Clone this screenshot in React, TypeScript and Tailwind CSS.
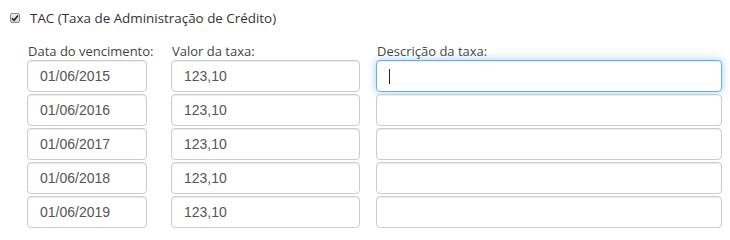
import React from "react";

const rows = [
  { date: "01/06/2015", value: "123,10" },
  { date: "01/06/2016", value: "123,10" },
  { date: "01/06/2017", value: "123,10" },
  { date: "01/06/2018", value: "123,10" },
  { date: "01/06/2019", value: "123,10" },
];

const labelCls =
  "h-[17px] pl-px text-[13px] leading-[17px] text-[#444] font-['Open_Sans',sans-serif] whitespace-nowrap";
const boxCls =
  "h-[32px] rounded-[4px] border border-[#ccc] bg-white shadow-[inset_0_1px_1px_rgba(0,0,0,0.075)] flex items-center px-[12px] text-[14px] text-[#555] font-['Liberation_Sans',Arial,sans-serif]";

export default function App() {
  return (
    <div className="w-[730px] h-[239px] bg-white overflow-hidden">
      <div className="flex items-center pt-[9px] pl-[10px] h-[27px]">
        <span className="w-[10px] h-[10px] rounded-[2px] border border-[#8a8a8a] bg-gradient-to-b from-[#f0f0f0] to-[#d6d6d6] flex items-center justify-center">
          <svg width="8" height="8" viewBox="0 0 8 8">
            <path d="M1 4.2 L3 6.2 L7 1.5" fill="none" stroke="#222" strokeWidth="1.6" />
          </svg>
        </span>
        <span className="ml-[10px] text-[13.4px] leading-[18px] text-[#333] font-['Open_Sans',sans-serif] whitespace-nowrap">
          TAC (Taxa de Administração de Crédito)
        </span>
      </div>
      <div className="flex pl-[27px] pt-[16px]">
        <div className="w-[120px] flex flex-col">
          <div className={labelCls}>Data do vencimento:</div>
          <div className="flex flex-col gap-[2px]">
            {rows.map((r) => (
              <div key={r.date} className={boxCls}>
                {r.date}
              </div>
            ))}
          </div>
        </div>
        <div className="w-[189px] ml-[24px] flex flex-col">
          <div className={labelCls}>Valor da taxa:</div>
          <div className="flex flex-col gap-[2px]">
            {rows.map((r, i) => (
              <div key={i} className={boxCls}>
                {r.value}
              </div>
            ))}
          </div>
        </div>
        <div className="w-[346px] ml-[16px] flex flex-col">
          <div className={labelCls}>Descrição da taxa:</div>
          <div className="flex flex-col gap-[2px]">
            {rows.map((_, i) =>
              i === 0 ? (
                <div
                  key={i}
                  className="h-[32px] rounded-[4px] border border-[#66afe9] bg-white shadow-[inset_0_1px_1px_rgba(0,0,0,0.075),0_0_8px_rgba(102,175,233,0.6)] flex items-center px-[12px]"
                >
                  <span className="w-px h-[15px] bg-[#222]" />
                </div>
              ) : (
                <div key={i} className={boxCls} />
              )
            )}
          </div>
        </div>
      </div>
    </div>
  );
}
